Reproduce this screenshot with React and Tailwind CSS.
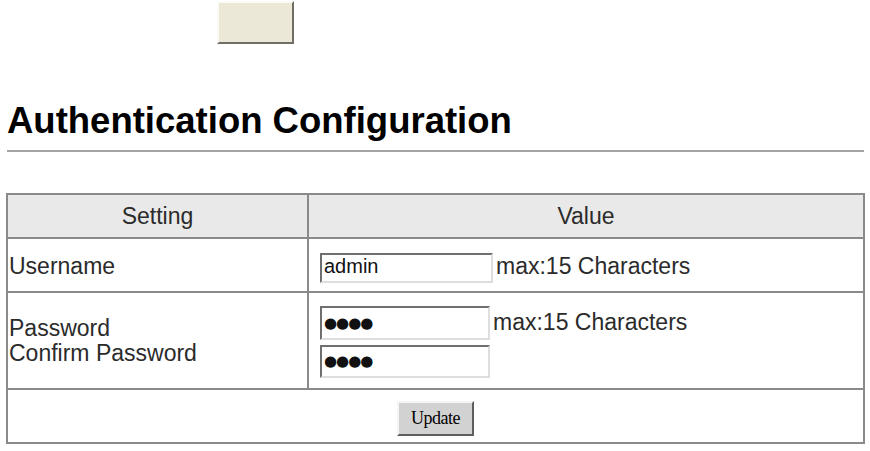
import React from 'react';

function Field({ value, w, h, pwd }) {
    return (
        <input
            type="text"
            readOnly
            value={value}
            className={`box-border bg-white border-2 border-t-[#6f6f6f] border-l-[#6f6f6f] border-r-[#dedede] border-b-[#dedede] px-[2px] outline-none text-[#111] ${pwd ? "font-['DejaVu_Sans',sans-serif] text-[15px] tracking-[-1px]" : "font-['Liberation_Sans',Arial,sans-serif] text-[20px] pb-[4px]"}`}
            style={{ width: w, height: h }}
        />
    );
}

export default function App() {
    return (
        <div className="w-[870px] h-[451px] bg-white overflow-hidden font-['Liberation_Sans',Arial,sans-serif] text-[#2b2b2b]">
            {/* empty toolbar button */}
            <div className="pl-[217px] pt-[1px]">
                <button className="box-border block w-[77px] h-[43px] bg-[#ebe8d8] border-2 border-t-[#fbfaf5] border-l-[#fbfaf5] border-r-[#716f64] border-b-[#716f64]" />
            </div>

            <h1 className="mt-[57px] ml-[7px] text-[36.5px] font-bold leading-[40px] text-black">Authentication Configuration</h1>
            <div className="mt-[9px] ml-[7px] w-[857px] h-[2px] bg-[#a3a3a3]" />

            {/* settings table */}
            <div className="mt-[41px] ml-[6px] w-[859px] box-border border-2 border-[#8a8a8a] text-[23px]">
                <div className="grid grid-cols-[301px_1fr] h-[44px] box-border border-b-2 border-[#8a8a8a] bg-[#e9e9e9]">
                    <div className="flex items-center justify-center border-r-2 border-[#8a8a8a]">Setting</div>
                    <div className="flex items-center justify-center">Value</div>
                </div>

                <div className="grid grid-cols-[301px_1fr] h-[54px] box-border border-b-2 border-[#8a8a8a]">
                    <div className="flex items-end pb-[8px] pl-[1px] border-r-2 border-[#8a8a8a]">Username</div>
                    <div className="flex items-end pb-[8px] pl-[11px] gap-[3px]">
                        <Field value="admin" w={173} h={30} />
                        <span>max:15 Characters</span>
                    </div>
                </div>

                <div className="grid grid-cols-[301px_1fr] h-[97px] box-border border-b-2 border-[#8a8a8a]">
                    <div className="flex flex-col justify-center pl-[1px] leading-[25px] border-r-2 border-[#8a8a8a]">
                        <span>Password</span>
                        <span>Confirm Password</span>
                    </div>
                    <div className="flex flex-col justify-center pl-[11px] pt-[2px] gap-[5px]">
                        <div className="flex items-end gap-[3px]">
                            <Field value="●●●●" w={170} h={34} pwd />
                            <span>max:15 Characters</span>
                        </div>
                        <Field value="●●●●" w={170} h={33} pwd />
                    </div>
                </div>

                <div className="flex items-center justify-center h-[52px] pt-[4px]">
                    <button className="box-border w-[77px] h-[35px] bg-[#d2d2d2] border-2 border-t-[#f5f5f5] border-l-[#f5f5f5] border-r-[#5e5e5e] border-b-[#5e5e5e] font-['Liberation_Serif','Times_New_Roman',serif] text-[18px] text-black tracking-[-0.5px] leading-none">
                        Update
                    </button>
                </div>
            </div>
        </div>
    );
}
